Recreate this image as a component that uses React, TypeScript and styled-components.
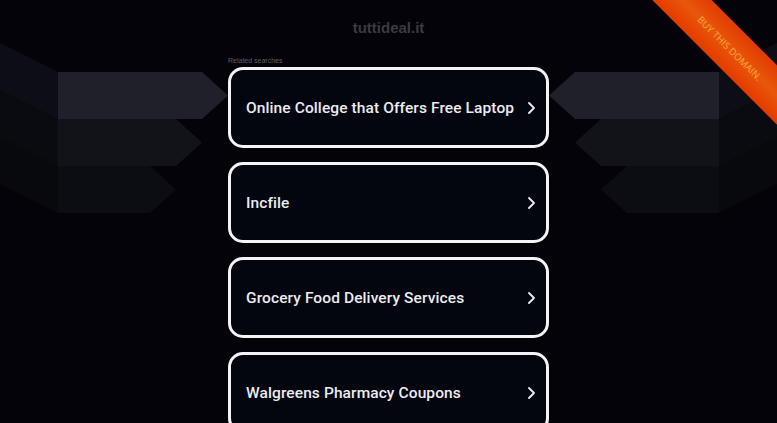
import styled, { createGlobalStyle } from "styled-components";

const GlobalStyle = createGlobalStyle`
  html, body {
    margin: 0;
    padding: 0;
    overflow: hidden;
    background: #030309;
  }
  body {
    font-family: "Liberation Sans", Arial, sans-serif;
  }
`;

const Page = styled.div`
  position: relative;
  width: 777px;
  height: 423px;
  display: grid;
  grid-template-columns: 228px 321px 228px;
  overflow: hidden;
`;

const Side = styled.div`
  display: flex;
  align-items: flex-start;
`;

const Center = styled.main`
  display: flex;
  flex-direction: column;
`;

const Title = styled.h1`
  margin: 0;
  text-align: center;
  font-size: 15px;
  line-height: 56px;
  font-weight: 700;
  color: #3a3b43;
`;

const Related = styled.div`
  font-size: 7px;
  line-height: 9px;
  color: #5d5e68;
  margin-bottom: 2px;
`;

const List = styled.div`
  display: flex;
  flex-direction: column;
  gap: 14px;
`;

const Card = styled.a`
  box-sizing: border-box;
  height: 81px;
  display: flex;
  align-items: center;
  justify-content: space-between;
  padding: 0 11px 0 15px;
  border: 3px solid #f4f4f6;
  border-radius: 15px;
  background: #03050f;
  color: #ececf0;
  text-decoration: none;
  white-space: nowrap;
  font-family: Roboto, "Liberation Sans", sans-serif;
  font-weight: 500;
  font-size: 15.5px;
  letter-spacing: 0.1px;
`;

const Ribbon = styled.div`
  position: absolute;
  top: 0;
  right: 0;
  width: 150px;
  height: 130px;
  overflow: hidden;
  pointer-events: none;
`;

const RibbonBand = styled.div`
  position: absolute;
  left: -7.5px;
  top: 26.5px;
  width: 220px;
  height: 42px;
  transform: rotate(45deg);
  background: linear-gradient(to bottom, #e23a00 0%, #e8570c 50%, #e43a00 100%);
  display: flex;
  align-items: center;
  justify-content: center;
  color: #f7a93e;
  font-family: "Open Sans", "Liberation Sans", sans-serif;
  font-size: 9.5px;
  letter-spacing: 0.1px;
`;

const Chevron = () => (
  <svg width="8" height="12" viewBox="0 0 8 12" fill="none">
    <path d="M2 1 L7 6 L2 11" stroke="#ececf0" strokeWidth="1.8" strokeLinecap="round" strokeLinejoin="round" />
  </svg>
);

const DecoShapes = () => (
  <>
    <polygon points="0,43 58,72 58,119 0,90" fill="#0d0e15" />
    <polygon points="0,90 58,119 58,166 0,137" fill="#0a0b10" />
    <polygon points="0,137 58,166 58,213 0,184" fill="#08090d" />
    <polygon points="58,72 202,72 228,95.5 202,119 58,119" fill="#1f2029" />
    <polygon points="58,119 176,119 202,142.5 176,166 58,166" fill="#121319" />
    <polygon points="58,166 150,166 176,189.5 150,213 58,213" fill="#0c0d12" />
  </>
);

const LeftDeco = () => (
  <svg width="228" height="230" viewBox="0 0 228 230">
    <DecoShapes />
  </svg>
);

const RightDeco = () => (
  <svg width="228" height="230" viewBox="0 0 228 230">
    <g transform="translate(228 0) scale(-1 1)">
      <DecoShapes />
    </g>
  </svg>
);

const searches = [
  "Online College that Offers Free Laptop",
  "Incfile",
  "Grocery Food Delivery Services",
  "Walgreens Pharmacy Coupons",
];

const App = () => {
  return (
    <>
      <GlobalStyle />
      <Page>
        <Side>
          <LeftDeco />
        </Side>
        <Center>
          <Title>tuttideal.it</Title>
          <Related>Related searches</Related>
          <List>
            {searches.map((s) => (
              <Card key={s} href="#">
                <span>{s}</span>
                <Chevron />
              </Card>
            ))}
          </List>
        </Center>
        <Side>
          <RightDeco />
        </Side>
        <Ribbon>
          <RibbonBand>BUY THIS DOMAIN.</RibbonBand>
        </Ribbon>
      </Page>
    </>
  );
};

export default App;
